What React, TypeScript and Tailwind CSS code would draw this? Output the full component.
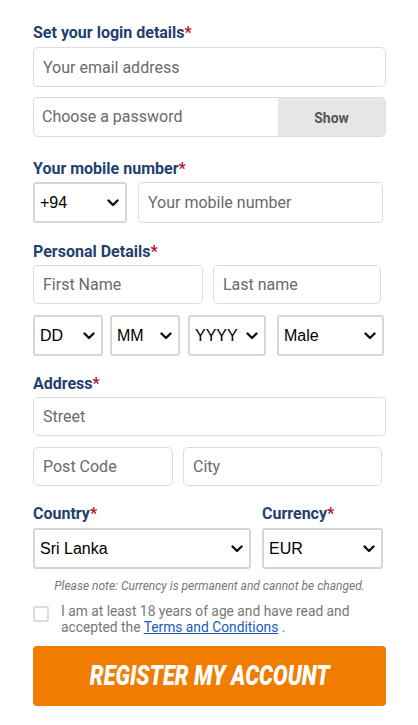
import React, { useState } from 'react';

const Chevron: React.FC = () => (
  <svg width="12" height="8" viewBox="0 0 12 8" className="shrink-0">
    <path d="M1.5 1.5 L6 6 L10.5 1.5" fill="none" stroke="#111" strokeWidth="2.4" strokeLinecap="round" strokeLinejoin="round" />
  </svg>
);

const Label: React.FC<{ text: string; className?: string }> = ({ text, className = '' }) => (
  <div className={`pt-[2px] text-[16px] leading-[20px] font-bold text-[#23406f] ${className}`}>
    {text}
    <span className="text-[#b3122e]">*</span>
  </div>
);

const Field: React.FC<{ placeholder: string; className?: string }> = ({ placeholder, className = '' }) => (
  <input
    placeholder={placeholder}
    className={`h-[39px] border border-[#dcdcdc] rounded-[5px] px-[9px] text-[16px] text-[#333] placeholder:text-[#6a6a6a] outline-none bg-white ${className}`}
  />
);

const FakeSelect: React.FC<{ value: string; className?: string }> = ({ value, className = '' }) => (
  <div
    className={`h-[41px] border-2 border-[#d6d6d6] rounded-[3px] pl-[5px] pr-[6px] flex items-center justify-between bg-white ${className}`}
    style={{ fontFamily: '"Liberation Sans", Arial, sans-serif' }}
  >
    <span className="text-[16px] text-black">{value}</span>
    <Chevron />
  </div>
);

const App: React.FC = () => {
  const [showPw, setShowPw] = useState(false);

  return (
    <div className="min-h-[725px] bg-white" style={{ fontFamily: 'Roboto, "Liberation Sans", sans-serif' }}>
      <div className="w-[353px] ml-[33px] pt-[21px] flex flex-col">
        <Label text="Set your login details" />
        <Field placeholder="Your email address" className="mt-[4px] h-[40px] w-full" />
        <div className="mt-[10px] h-[40px] flex border border-[#dcdcdc] rounded-[5px] overflow-hidden">
          <input
            type={showPw ? 'text' : 'password'}
            placeholder="Choose a password"
            className="flex-1 min-w-0 px-[8px] text-[16px] placeholder:text-[#6a6a6a] outline-none"
          />
          <button
            onClick={() => setShowPw(!showPw)}
            className="w-[107px] bg-[#e6e6e6] text-[14px] font-bold text-[#555] pt-[2px]"
          >
            Show
          </button>
        </div>

        <Label text="Your mobile number" className="mt-[20px]" />
        <div className="mt-[3px] flex gap-[11px]">
          <FakeSelect value="+94" className="w-[94px]" />
          <Field placeholder="Your mobile number" className="w-[245px] h-[41px]" />
        </div>

        <Label text="Personal Details" className="mt-[17px]" />
        <div className="mt-[3px] flex gap-[10px]">
          <Field placeholder="First Name" className="w-[170px]" />
          <Field placeholder="Last name" className="w-[168px]" />
        </div>
        <div className="mt-[11px] flex">
          <FakeSelect value="DD" className="w-[70px]" />
          <FakeSelect value="MM" className="w-[70px] ml-[7px]" />
          <FakeSelect value="YYYY" className="w-[78px] ml-[8px]" />
          <FakeSelect value="Male" className="w-[107px] ml-[11px]" />
        </div>

        <Label text="Address" className="mt-[16px]" />
        <Field placeholder="Street" className="mt-[3px] w-full" />
        <div className="mt-[11px] flex gap-[10px]">
          <Field placeholder="Post Code" className="w-[140px]" />
          <Field placeholder="City" className="w-[199px]" />
        </div>

        <div className="mt-[16px] flex gap-[11px]">
          <div className="flex flex-col w-[218px]">
            <Label text="Country" />
            <FakeSelect value="Sri Lanka" className="mt-[4px] w-full" />
          </div>
          <div className="flex flex-col w-[121px]">
            <Label text="Currency" />
            <FakeSelect value="EUR" className="mt-[4px] w-full" />
          </div>
        </div>

        <p className="mt-[9px] text-center text-[12px] leading-[16px] italic text-[#777]">
          Please note: Currency is permanent and cannot be changed.
        </p>

        <label className="mt-[9px] flex items-start">
          <span className="mt-[3px] w-[16px] h-[16px] border-2 border-[#dcdcdc] rounded-[2px] shrink-0" />
          <span className="ml-[12px] text-[13.8px] leading-[16px] text-[#777]">
            I am at least 18 years of age and have read and accepted the{' '}
            <a href="#" className="text-[#1a5bb8] underline">Terms and Conditions</a> .
          </span>
        </label>

        <button className="mt-[11px] h-[60px] w-full bg-[#f07d00] rounded-[4px] flex items-center justify-center">
          <span className="inline-block scale-x-[0.78] text-white text-[28px] font-black italic uppercase">
            Register my account
          </span>
        </button>
      </div>
    </div>
  );
};

export default App;
